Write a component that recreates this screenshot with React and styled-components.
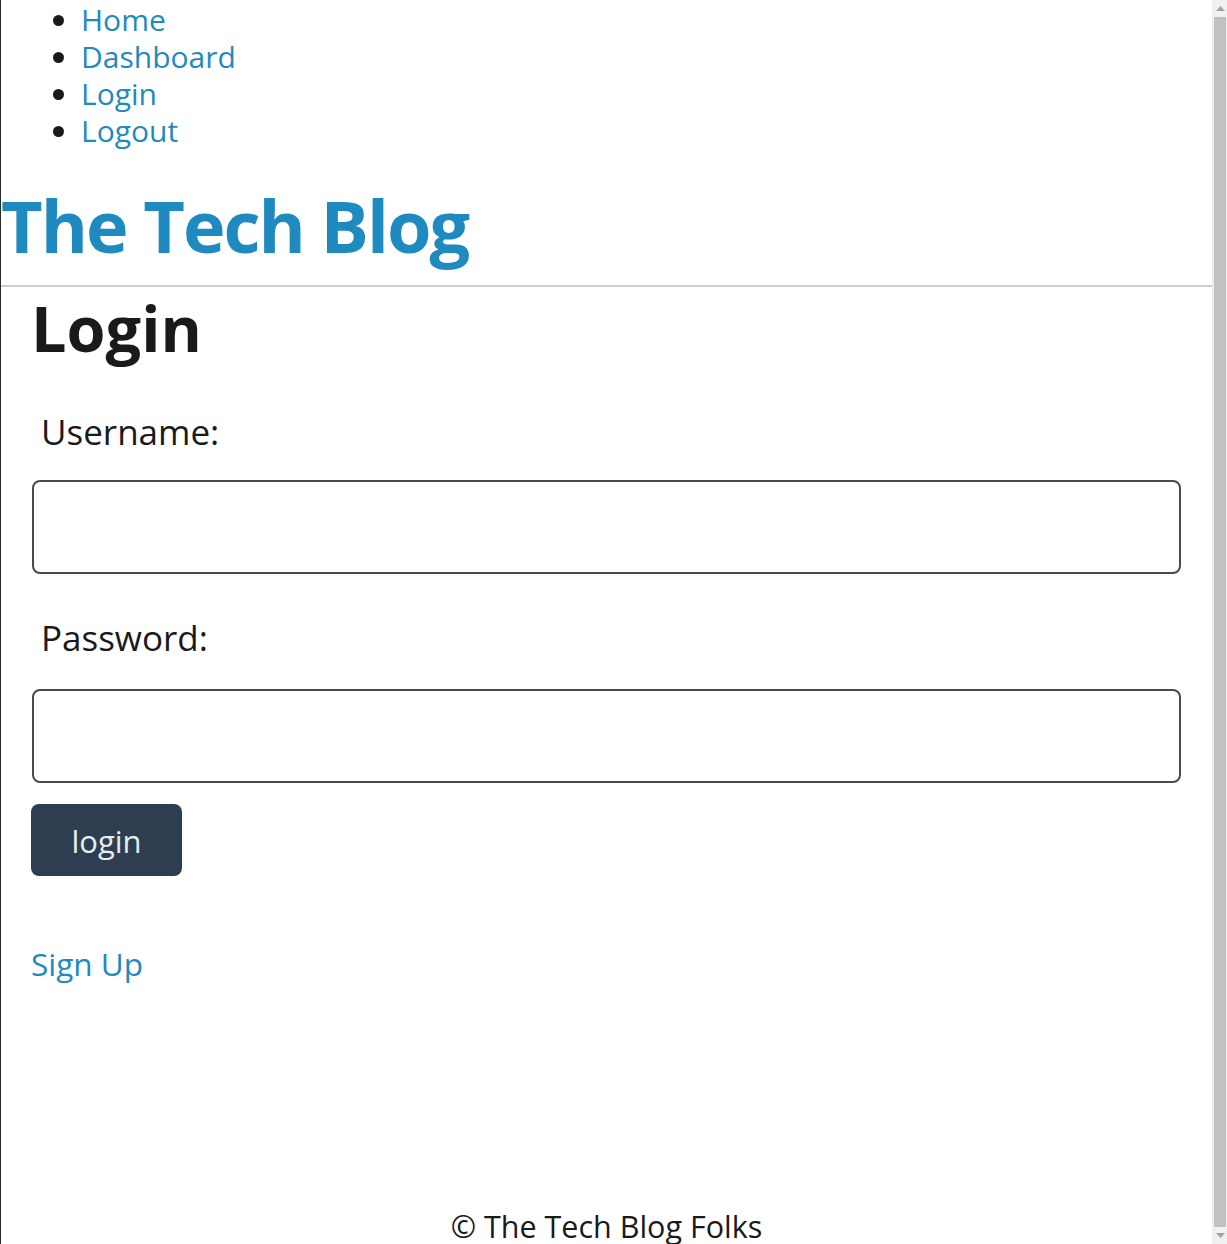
import React from "react";
import styled, { createGlobalStyle } from "styled-components";

const GlobalStyle = createGlobalStyle`
  html, body { margin: 0; padding: 0; background: #ffffff; overflow: hidden; }
  body {
    font-family: "Open Sans", "Noto Sans", "Liberation Sans", sans-serif;
    color: #1a1a1a;
  }
  *, *::before, *::after { box-sizing: border-box; }
`;

const Frame = styled.div`
  display: flex;
  height: 100vh;
  overflow: hidden;
`;

const Viewport = styled.div`
  flex: 1;
  min-width: 0;
  border-left: 1px solid #2b2b2b;
  overflow: hidden;
`;

const Page = styled.div`
  display: flex;
  flex-direction: column;
  min-height: 1258px;
`;

const Scrollbar = styled.div`
  width: 15px;
  flex: none;
  display: flex;
  flex-direction: column;
  background: #f1f1f1;
  border-left: 1px solid #ececec;
`;

const ScrollArrow = styled.div`
  height: 17px;
  flex: none;
  display: flex;
  align-items: center;
  justify-content: center;
`;

const Thumb = styled.div`
  flex: 1;
  margin: 0 1px 0 1px;
  background: #c1c1c1;
`;

const Header = styled.header`
  display: flex;
  flex-direction: column;
`;

const NavList = styled.ul`
  margin: 0;
  padding: 1px 0 0 80px;
  list-style: disc;
  font-size: 30px;
  line-height: 37px;
  color: #1a1a1a;
`;

const NavItem = styled.li`
  padding-left: 0;
`;

const Link = styled.a`
  color: #1f8ac0;
  text-decoration: none;
`;

const SiteTitle = styled.h1`
  margin: 31px 0 15px;
  font-size: 72px;
  line-height: 90px;
  font-weight: 700;
  letter-spacing: -2px;
`;

const Rule = styled.hr`
  margin: 0;
  border: none;
  height: 2px;
  background: #cccccc;
`;

const Main = styled.main`
  flex: 1;
  padding: 0 31px;
  display: flex;
  flex-direction: column;
`;

const PageTitle = styled.h2`
  margin: 3px 0 0 -1px;
  font-size: 63px;
  line-height: 76px;
  font-weight: 700;
  color: #1a1a1a;
`;

const Form = styled.form`
  display: flex;
  flex-direction: column;
  align-items: flex-start;
`;

const Label = styled.label`
  display: block;
  padding-left: 9px;
  margin-top: ${(p) => p.$top};
  font-size: 35px;
  line-height: 50px;
  color: #1a1a1a;
`;

const Input = styled.input`
  display: block;
  width: 100%;
  height: 94px;
  margin-top: ${(p) => p.$top};
  border: 2px solid #4a4a4a;
  border-radius: 8px;
  background: #ffffff;
  font-family: inherit;
  font-size: 30px;
  padding: 0 16px;
  outline: none;
`;

const Button = styled.button`
  margin-top: 21px;
  margin-left: -1px;
  width: 151px;
  height: 72px;
  border: none;
  border-radius: 8px;
  background: #2d3e50;
  color: #e4eeee;
  font-family: inherit;
  font-size: 31px;
  line-height: 1;
  padding: 2px 0 0;
  cursor: pointer;
`;

const SignUp = styled(Link)`
  display: block;
  margin-top: 68px;
  margin-left: -1px;
  font-size: 31.5px;
  line-height: 40px;
`;

const Footer = styled.footer`
  margin-top: 2px;
  text-align: center;
  font-size: 30.5px;
  line-height: 40px;
  color: #1a1a1a;
  padding-bottom: 12px;
`;

function Triangle({ down }) {
  return (
    <svg width="9" height="6" viewBox="0 0 9 6">
      <polygon
        points={down ? "0,0 9,0 4.5,5" : "4.5,0 9,5 0,5"}
        fill="#a3a3a3"
      />
    </svg>
  );
}

export default function App() {
  return (
    <>
      <GlobalStyle />
      <Frame>
        <Viewport>
          <Page>
            <Header>
              <NavList>
                <NavItem><Link href="#">Home</Link></NavItem>
                <NavItem><Link href="#">Dashboard</Link></NavItem>
                <NavItem><Link href="#">Login</Link></NavItem>
                <NavItem><Link href="#">Logout</Link></NavItem>
              </NavList>
              <SiteTitle>
                <Link href="#">The Tech Blog</Link>
              </SiteTitle>
              <Rule />
            </Header>
            <Main>
              <PageTitle>Login</PageTitle>
              <Form onSubmit={(e) => e.preventDefault()}>
                <Label $top="41px" htmlFor="username">Username:</Label>
                <Input $top="23px" id="username" type="text" />
                <Label $top="39px" htmlFor="password">Password:</Label>
                <Input $top="26px" id="password" type="password" />
                <Button type="submit">login</Button>
              </Form>
              <SignUp href="#">Sign Up</SignUp>
            </Main>
            <Footer>© The Tech Blog Folks</Footer>
          </Page>
        </Viewport>
        <Scrollbar>
          <ScrollArrow><Triangle /></ScrollArrow>
          <Thumb />
          <ScrollArrow><Triangle down /></ScrollArrow>
        </Scrollbar>
      </Frame>
    </>
  );
}
